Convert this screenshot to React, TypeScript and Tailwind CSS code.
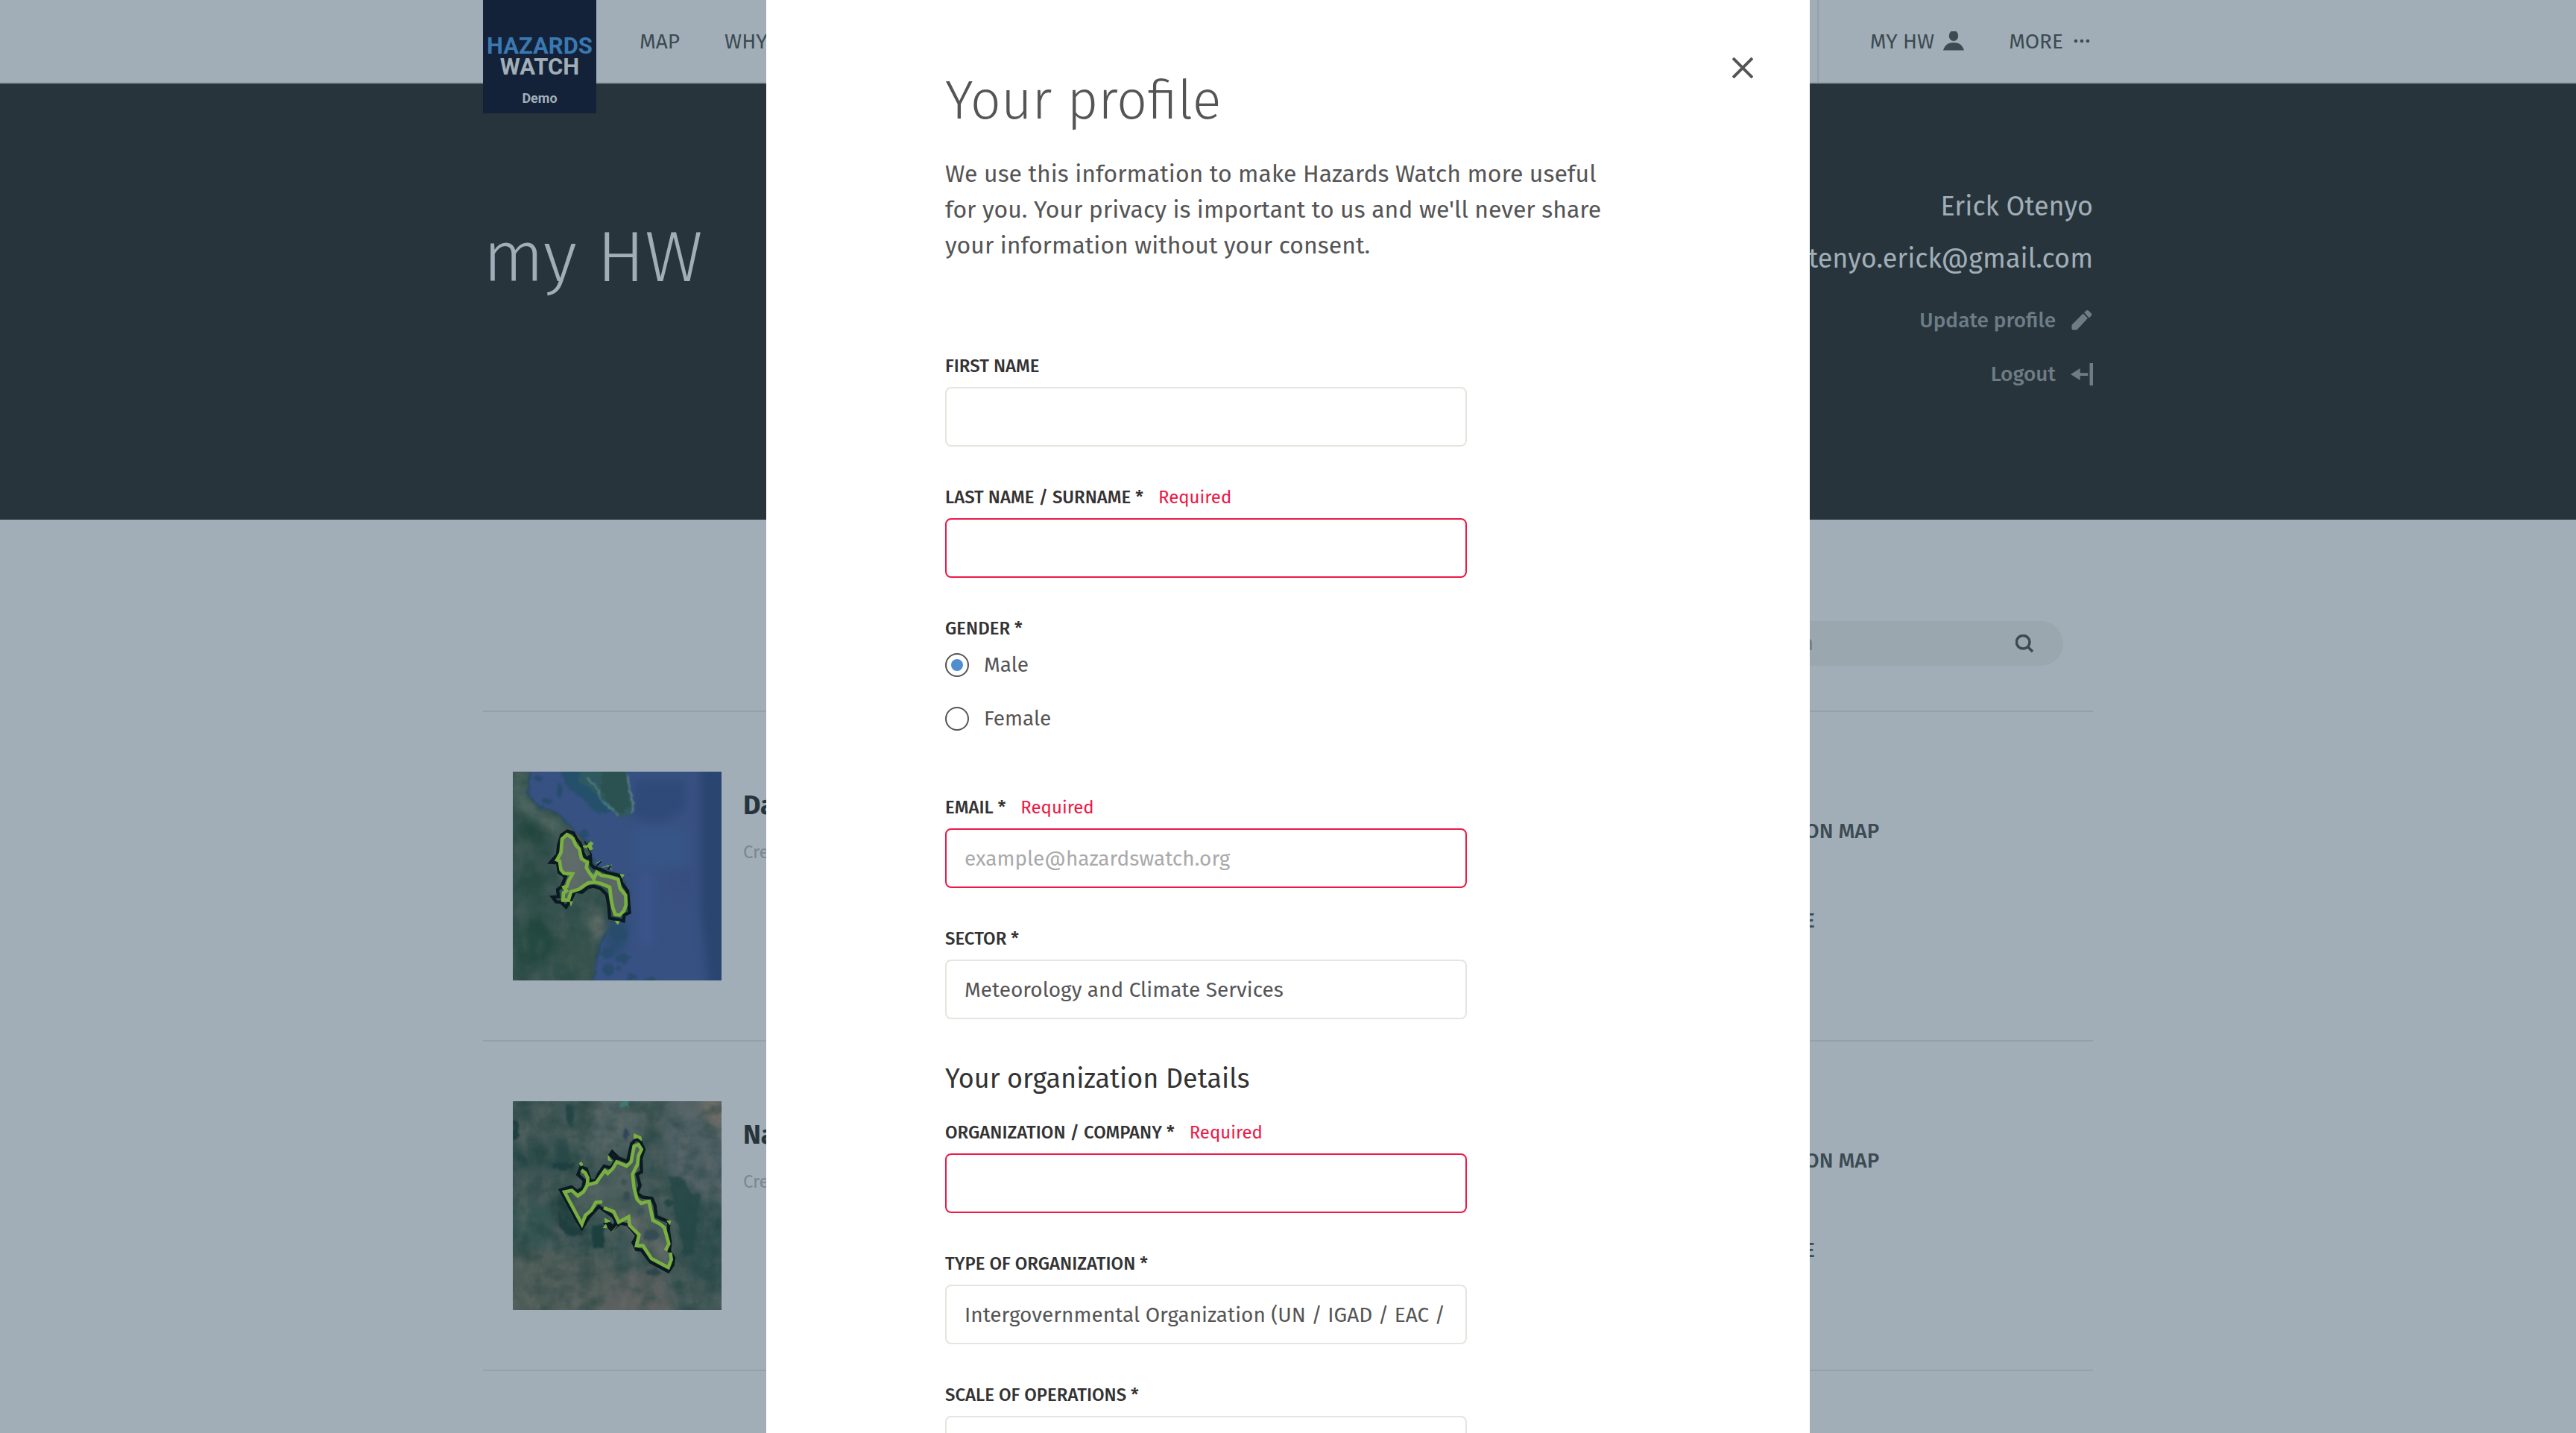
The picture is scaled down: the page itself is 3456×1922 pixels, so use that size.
import React from 'react';

type FieldProps = {
  id: string;
  label: string;
  error?: boolean;
  placeholder?: string;
  value?: string;
};

function Field({ id, label, error, placeholder, value }: FieldProps) {
  return (
    <div className="mb-[54px]">
      <div className="flex items-center gap-5 leading-7">
        <label htmlFor={id} className="text-2xl leading-7 font-medium text-[#333] uppercase">
          {label}
        </label>
        {error && <span className="text-2xl leading-7 text-[#ed1846]">Required</span>}
      </div>
      <input
        id={id}
        type="text"
        defaultValue={value}
        placeholder={placeholder}
        className={
          'mt-[14px] block h-20 w-full max-w-[700px] rounded-lg border-2 bg-white px-6 text-[28px] text-[#555] outline-none placeholder:text-[#aaa] ' +
          (error ? 'border-[#ed1846]' : 'border-[#e5e5df]')
        }
      />
    </div>
  );
}

function Radio({ label, checked }: { label: string; checked?: boolean }) {
  return (
    <label className="flex items-center gap-5 text-[28px] leading-8 text-[#555]">
      <input
        type="radio"
        name="gender"
        defaultChecked={checked}
        className="grid size-8 appearance-none place-items-center rounded-full border-2 border-[#555] bg-white before:size-4 before:rounded-full checked:before:bg-[#4f8fd0]"
      />
      {label}
    </label>
  );
}

function UserIcon() {
  return (
    <svg className="size-7" viewBox="0 1 28 28" fill="currentColor" aria-hidden="true">
      <ellipse cx="14" cy="7" rx="6.2" ry="7" />
      <path d="M0 26.5c1-3.600 3-6.500 5.500-8.300C7.500 16.700 10.500 16.200 14 16.200s6.500.5 8.500 2c2.500 1.800 4.500 4.700 5.500 8.300z" />
    </svg>
  );
}

function DotsIcon() {
  return (
    <svg className="size-7" viewBox="0 0 28 28" fill="currentColor" aria-hidden="true">
      <circle cx="5" cy="13" r="2.300" />
      <circle cx="13" cy="13" r="2.300" />
      <circle cx="21" cy="13" r="2.300" />
    </svg>
  );
}

function PencilIcon() {
  return (
    <svg className="size-[30px]" viewBox="0 0 30 30" fill="currentColor" aria-hidden="true">
      <path d="M1.500 20.700 16.700 5.500l6.300 6.300L8.300 27.500H3a1.500 1.500 0 0 1-1.500-1.500zM18.200 4.100l2.300-2.200a2.800 2.800 0 0 1 3.900 0l3 3.100a2.600 2.600 0 0 1 0 3.700l-2.700 2.700z" />
    </svg>
  );
}

function LogoutIcon() {
  return (
    <svg className="size-[30px]" viewBox="0 0 30 30" fill="currentColor" aria-hidden="true">
      <path d="M25.500 0H30v30h-4.500zM0 15 12.700 7v6.200h10.500v3.700H12.700V23z" />
    </svg>
  );
}

function Texture({ id, seed }: { id: string; seed: number }) {
  return (
    <>
      <filter id={id} x="0" y="0" width="100%" height="100%" colorInterpolationFilters="sRGB">
        <feTurbulence type="fractalNoise" baseFrequency="0.02 0.012" numOctaves="5" seed={seed} />
        <feColorMatrix values="0 0 0 0 0.5  0 0 0 0 0.48  0 0 0 0 0.46  1.800 0 0 0 -0.750" />
      </filter>
      <filter id={id + '-dark'} x="0" y="0" width="100%" height="100%" colorInterpolationFilters="sRGB">
        <feTurbulence type="fractalNoise" baseFrequency="0.012 0.015" numOctaves="5" seed={seed + 9} />
        <feColorMatrix values="0 0 0 0 0.1  0 0 0 0 0.24  0 0 0 0 0.22  0 2.200 0 0 -0.950" />
      </filter>
      <filter id={id + '-soft'} x="-20%" y="-20%" width="140%" height="140%" colorInterpolationFilters="sRGB">
        <feGaussianBlur stdDeviation="18" />
      </filter>
      <filter id={id + '-edge'} x="-10%" y="-10%" width="120%" height="120%" colorInterpolationFilters="sRGB">
        <feTurbulence type="fractalNoise" baseFrequency="0.04" numOctaves="3" seed={seed} result="n" />
        <feDisplacementMap in="SourceGraphic" in2="n" scale="22" xChannelSelector="R" yChannelSelector="G" />
        <feGaussianBlur stdDeviation="3" />
      </filter>
    </>
  );
}

function CoastMap() {
  return (
    <svg className="size-[280px] shrink-0" viewBox="84 75 840 840" role="img" aria-label="Coastal area map">
      <defs>
        <Texture id="coast" seed={4} />
      </defs>
      <rect x="84" y="75" width="840" height="840" fill="#35524f" />
      <g filter="url(#coast-soft)">
        <path d="M84 75h60l-10 100 60 60 90 40-20 60-100-60-80-80z" fill="#4d6660" />
        <ellipse cx="160" cy="320" rx="60" ry="50" fill="#24483f" />
        <ellipse cx="160" cy="520" rx="50" ry="70" fill="#294b44" />
        <ellipse cx="320" cy="420" rx="60" ry="120" fill="#4d5e59" />
        <ellipse cx="420" cy="690" rx="36" ry="60" fill="#5b6965" />
        <ellipse cx="170" cy="760" rx="80" ry="100" fill="#244a41" />
        <ellipse cx="330" cy="800" rx="70" ry="80" fill="#36524c" />
      </g>
      <rect x="84" y="75" width="840" height="840" filter="url(#coast)" opacity="0.22" />
      <rect x="84" y="75" width="840" height="840" filter="url(#coast-dark)" opacity="0.4" />
      <path
        d="M165 40 150 110l-5 50 40 55 75 25 60 60 70 70 20 80 110 40 30 70v80l-50 50-50 50-30 90-20 165h600V40z"
        fill="#375182"
        stroke="#294c68"
        strokeWidth="8"
        filter="url(#coast-edge)"
      />
      <g filter="url(#coast-soft)">
        <path d="M580 110h200v110l-100 60-120-20z" fill="#2f4a78" />
        <path d="M840 40h120v900h-90l-30-320z" fill="#2a4570" />
        <path d="M560 300h220v160H560z" fill="#375587" />
        <path d="M590 480h60v300h-60z" fill="#3b548a" />
        <path d="M700 460h120v110H700z" fill="#374f80" />
        <path d="m470 660 80 20-20 110-70 30z" fill="#2a4c6e" />
      </g>
      <g filter="url(#coast-edge)">
        <path d="m275 60 80 0 110 115 20 60-60 10-60-60-70-60z" fill="#24506c" />
        <path d="M350 60h195l10 90 18 60-18 40-45 8-60-60-50-50-50-35z" fill="#30595f" />
        <path d="M440 60h95l8 85 16 65-35 35-50-30-35-60z" fill="#2b5250" />
        <path d="m545 85 10 65 16 50-10 40" fill="none" stroke="#6b8f96" strokeWidth="6" />
        <path d="M380 100 430 150 440 190 510 250" fill="none" stroke="#4f8184" strokeWidth="7" />
        <g fill="#284c6c">
          <ellipse cx="188" cy="102" rx="15" ry="12" />
          <ellipse cx="222" cy="194" rx="20" ry="14" />
          <ellipse cx="272" cy="152" rx="14" ry="30" />
          <ellipse cx="368" cy="325" rx="16" ry="16" />
          <ellipse cx="525" cy="825" rx="32" ry="18" />
          <ellipse cx="465" cy="872" rx="20" ry="26" />
          <ellipse cx="508" cy="868" rx="12" ry="9" />
          <ellipse cx="564" cy="902" rx="20" ry="14" />
          <ellipse cx="636" cy="912" rx="24" ry="12" />
          <ellipse cx="516" cy="725" rx="30" ry="26" />
          <ellipse cx="465" cy="805" rx="28" ry="18" />
        </g>
      </g>
      <path
        d="M302 326 338 372 360 425 384 440 394 484 422 480 508 508 538 572 532 634 496 648 480 590 474 540 416 520 350 548 310 590 286 590 290 540 304 520 324 486 278 470 262 430 280 345z"
        fill="#66706f"
        opacity="0.75"
      />
      <path
        d="M304 314 328 322 342 348 356 364 366 400 378 426 396 416 398 448 412 462 436 468 466 482 512 492 522 522 546 556 550 600 554 642 532 652 530 676 508 670 474 664 470 614 462 570 438 546 410 536 386 540 362 560 334 556 318 590 298 620 278 600 258 598 244 580 268 578 264 550 280 538 296 498 270 480 264 442 236 440 264 408 268 370 280 330z"
        fill="none"
        stroke="#0b1a22"
        strokeWidth="13"
        strokeLinejoin="miter"
      />
      <path
        d="M304 560 290 540 302 536 308 515 324 486 290 484 278 470 272 434 262 430 278 400 282 346 302 328 326 344 338 372 352 386 360 425 384 440 380 462 394 484 410 506 422 480 440 492 466 496 508 508 516 545 538 572 540 610 532 634 514 652 496 650 486 620 480 590 474 540 440 526 416 520 388 522 370 534 350 548 318 558 308 592 286 592 288 562 300 556"
        fill="none"
        stroke="#7ab040"
        strokeWidth="14"
        strokeLinejoin="miter"
      />
      <path d="m366 376 18-6 14-14 10 8-8 10 6 12-16 6-10-10zM418 444l22-10M445 460l38-10M462 450l22 20M516 488l16 2-8 12zM496 676l18 2-8 12zM314 598l10 0-6 16z" fill="#7ab040" stroke="#7ab040" strokeWidth="3" />
      <path d="m372 356 12 14M384 380l16 28-10 22M418 458l22-22M466 470l12-18" fill="none" stroke="#0b1a22" strokeWidth="5" />
    </svg>
  );
}

function HighlandMap() {
  return (
    <svg className="size-[280px] shrink-0" viewBox="84 81 840 840" role="img" aria-label="Highland area map">
      <defs>
        <Texture id="high" seed={21} />
      </defs>
      <rect x="84" y="81" width="840" height="840" fill="#3e5655" />
      <g filter="url(#high-soft)">
        <path d="M430 40h180l20 131-60 90-150 60-60-60z" fill="#4f6162" />
        <path d="M700 40h264v441l-160-20-100-110z" fill="#4f6064" />
        <path d="M830 60h134v130l-100-20z" fill="#6a6a66" />
        <path d="M44 720l260-40 200 60-20 221H44z" fill="#4e5c58" />
        <path d="m480 800 200-60 60 221H400z" fill="#5a605f" />
        <path d="M44 260h260l80 40-60 60-280-30z" fill="#294a49" />
        <path d="m230 480 80-40 50 150-40 30-50-30z" fill="#21403f" />
        <path d="M60 500h174v160H60z" fill="#345552" />
        <path d="M480 500 590 560l20 70 90 30v60l-90-40z" fill="#626765" />
        <path d="M800 480h160v300l-160 30z" fill="#2f4e4e" />
      </g>
      <rect x="84" y="81" width="840" height="840" filter="url(#high)" opacity="0.35" />
      <rect x="84" y="81" width="840" height="840" filter="url(#high-dark)" opacity="0.5" />
      <g filter="url(#high-edge)">
        <path d="m710 380 60 10 30 60 40 10-15 130-20 100-30 20-20-100z" fill="#234845" opacity="0.85" />
        <path d="m268 530 40 50 70 20-20 20-50 0-40-40z" fill="#1f3e40" />
        <path d="M402 580h50v90h-50z" fill="#1d403f" />
        <path d="m300 90 30 20-5 70-25-20z" fill="#234644" />
        <ellipse cx="640" cy="620" rx="32" ry="24" fill="#203c46" />
        <ellipse cx="542" cy="462" rx="14" ry="22" fill="#203c46" />
        <ellipse cx="532" cy="405" rx="14" ry="16" fill="#2a454c" />
        <ellipse cx="595" cy="524" rx="16" ry="14" fill="#2c474a" />
        <ellipse cx="540" cy="215" rx="8" ry="26" fill="#2e4459" />
        <ellipse cx="650" cy="770" rx="28" ry="16" fill="#2f454c" />
        <ellipse cx="712" cy="490" rx="18" ry="14" fill="#264744" />
        <path d="M516 81h34v24h-34z" fill="#3e7a74" />
        <path d="M84 160h16l10 60-26 20zM245 330h80v24h-80z" fill="#203f40" />
      </g>
      <path
        d="M292 446 346 462 384 418 454 360 502 325 542 342 570 262 602 275 566 375 584 476 632 484 648 560 694 590 712 655 710 750 642 714 582 662 592 618 550 546 510 568 490 525 418 486 362 576z"
        fill="#6b7371"
        opacity="0.3"
      />
      <path
        d="M276 438 320 426 342 444 366 430 372 400 346 376 358 346 380 354 388 378 396 402 418 400 430 372 452 342 478 350 500 318 476 296 484 284 510 310 546 324 562 252 580 234 596 240 612 275 600 310 602 365 584 375 596 420 584 450 604 466 644 472 656 500 662 545 712 566 710 600 718 650 714 684 732 712 728 740 710 766 638 728 602 680 582 678 568 650 584 622 546 578 516 572 482 598 460 576 474 574 488 588 500 568 488 545 430 505 392 545 362 592 342 560z"
        fill="none"
        stroke="#0b1a22"
        strokeWidth="13"
      />
      <path
        d="M384 418 386 390 376 370 360 358M698 682 712 655 694 590 678 576 648 560 632 484 600 492 584 476 572 430 566 375 586 335 590 300 602 275 590 256 572 262 560 325 542 342 502 325 486 352 466 372 454 360 420 408 384 418 368 446 346 462 322 440 292 446 362 576 376 540 400 520 418 488 444 486M450 510 490 525 510 568 550 546 554 580 592 618 582 662 608 662 642 714 710 750 722 718 718 690"
        fill="none"
        stroke="#7ab040"
        strokeWidth="14"
      />
      <path d="m572 212 28 12 2 16-16-12-14 4zM468 300l14 22-14-4zM352 330l8-4 6 10-8 6zM454 552l22 12-20 6zM448 590l10-14 6 14zM482 606l22-24M704 562l16 0-4 16z" fill="#7ab040" stroke="#7ab040" strokeWidth="3" />
    </svg>
  );
}

function AreaRow({ name, map }: { name: string; map: React.ReactNode }) {
  return (
    <li className="flex border-b-2 border-[#93a1a9] py-20 pl-10">
      {map}
      <div className="min-w-0 flex-1 pt-[23px] pl-[29px]">
        <h3 className="text-4xl leading-[44px] font-bold text-[#27343c]">{name}</h3>
        <p className="mt-[27px] text-2xl leading-7 text-[#7a8890]">Created January 2022</p>
      </div>
      <div className="flex w-[456px] flex-col items-start gap-[88px] pt-16">
        <button className="text-[28px] leading-8 font-medium">VIEW ON MAP</button>
        <button className="text-[28px] leading-8 font-medium">SHARE</button>
      </div>
    </li>
  );
}

function ProfileModal() {
  return (
    <div className="absolute inset-0 z-20 flex justify-center overflow-hidden">
      <section role="dialog" aria-labelledby="profile-title" className="relative w-full max-w-[1400px] bg-white px-60 pt-[95px]">
        <button aria-label="Close" className="absolute top-[71px] right-[70px] grid size-10 place-items-center text-[#555]">
          <svg className="size-7" viewBox="0 0 28 28" fill="none" stroke="currentColor" strokeWidth="4" aria-hidden="true">
            <path d="m1 1 26 26M27 1 1 27" />
          </svg>
        </button>
        <h2 id="profile-title" className="text-7xl leading-[80px] font-light text-[#555]">
          Your profile
        </h2>
        <p className="mt-[34px] mb-[124px] max-w-[900px] text-[32px] leading-[48px] text-[#555]">
          We use this information to make Hazards Watch more useful for you. Your privacy is important to us and we'll never
          share your information without your consent.
        </p>
        <form>
          <Field id="first-name" label="First name" />
          <Field id="last-name" label="Last name / surname *" error />
          <fieldset className="mb-[89px]">
            <legend className="mb-[19px] text-2xl leading-7 font-medium text-[#333] uppercase">Gender *</legend>
            <div className="flex flex-col items-start gap-10">
              <Radio label="Male" checked />
              <Radio label="Female" />
            </div>
          </fieldset>
          <Field id="email" label="Email *" error placeholder="example@hazardswatch.org" />
          <Field id="sector" label="Sector *" value="Meteorology and Climate Services" />
          <h3 className="mt-[58px] mb-9 text-4xl leading-[44px] text-[#333]">Your organization Details</h3>
          <Field id="company" label="Organization / company *" error />
          <Field id="org-type" label="Type of organization *" value="Intergovernmental Organization (UN / IGAD / EAC /" />
          <Field id="scale" label="Scale of operations *" />
        </form>
      </section>
    </div>
  );
}

export default function App() {
  return (
    <div className="relative h-screen overflow-hidden bg-[#a1aeb7] font-['Fira_Sans','Open_Sans',sans-serif] text-[#3c4a52]">
      <header className="h-28 border-b-2 border-[#93a1a9]">
        <div className="mx-auto flex h-full max-w-[2160px] text-[28px]">
          <a
            href="#home"
            className="z-10 flex size-[152px] shrink-0 flex-col items-center bg-[#142239] pt-12 font-['Roboto',sans-serif] font-bold text-[#a1aeb7]"
          >
            <span className="text-[31px] leading-7 text-[#3a78b2]">HAZARDS</span>
            <span className="text-[31px] leading-7">WATCH</span>
            <span className="mt-4 text-lg leading-6">Demo</span>
          </a>
          <nav className="ml-[58px] flex items-center gap-[60px] pt-0.5">
            <a href="#map">MAP</a>
            <a href="#why">WHY HW?</a>
          </nav>
          <nav className="ml-auto flex items-center gap-[60px] border-l-2 border-[#93a1a9] pt-0.5 pl-[69px]">
            <a href="#my-hw" className="flex items-center gap-3">
              MY HW <UserIcon />
            </a>
            <button className="flex items-center gap-3">
              MORE <DotsIcon />
            </button>
          </nav>
        </div>
      </header>

      <section className="h-[585px] bg-[#27343c] text-[#a1aeb7]">
        <div className="mx-auto flex max-w-[2160px] justify-between">
          <h1 className="pt-[177px] text-8xl leading-[112px] font-light">my HW</h1>
          <div className="flex flex-col items-end pt-[143px]">
            <p className="text-4xl leading-[44px]">Erick Otenyo</p>
            <p className="mt-[26px] text-4xl leading-[44px]">otenyo.erick@gmail.com</p>
            <button className="mt-[45px] flex items-center gap-5 text-[28px] leading-8 font-medium text-[#6e7c85]">
              Update profile <PencilIcon />
            </button>
            <button className="mt-10 flex items-center gap-5 text-[28px] leading-8 font-medium text-[#6e7c85]">
              Logout <LogoutIcon />
            </button>
          </div>
        </div>
      </section>

      <main className="mx-auto max-w-[2160px] pt-[136px]">
        <div className="flex justify-end border-b-2 border-[#93a1a9] pr-10 pb-[60px]">
          <div className="flex h-[60px] w-[460px] items-center rounded-full bg-[#9aa7af] px-10">
            <input
              type="search"
              aria-label="Search"
              placeholder="Search"
              className="min-w-0 flex-1 bg-transparent text-[28px] outline-none placeholder:text-[#6e7c85]"
            />
            <svg className="size-6" viewBox="0 0 24 24" fill="none" stroke="currentColor" strokeWidth="3.500" aria-hidden="true">
              <circle cx="10.200" cy="10.200" r="8.800" />
              <path d="m16.500 16.500 6.500 6.500" />
            </svg>
          </div>
        </div>
        <ul>
          <AreaRow name="Dar es Salaam" map={<CoastMap />} />
          <AreaRow name="Nakuru" map={<HighlandMap />} />
        </ul>
      </main>

      <ProfileModal />
    </div>
  );
}
